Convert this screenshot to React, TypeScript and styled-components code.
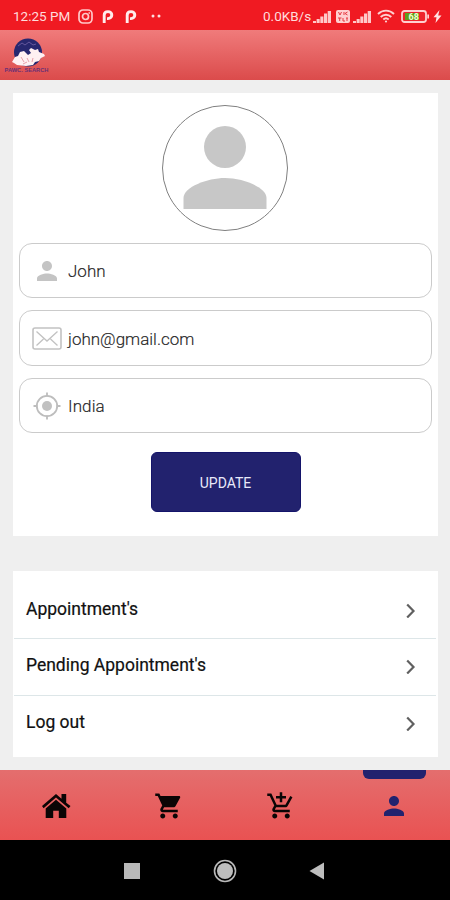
import React from "react";
import styled, { createGlobalStyle } from "styled-components";

const GlobalStyle = createGlobalStyle`
  * { box-sizing: border-box; }
  body { margin: 0; background: #efefef; }
`;

const navy = "#22226e";

const Screen = styled.div`
  width: 450px;
  height: 900px;
  display: flex;
  flex-direction: column;
  background: #efefef;
  font-family: Roboto, "Liberation Sans", sans-serif;
  overflow: hidden;
`;

const StatusBar = styled.div`
  height: 30px;
  flex: none;
  display: flex;
  align-items: center;
  justify-content: space-between;
  padding: 2px 8px 0 13px;
  background: #f01a22;
  color: #ffdcdc;
`;

const StatusGroup = styled.div`
  display: flex;
  align-items: center;
`;

const StatusText = styled.span<{ $width: number }>`
  width: ${(p) => p.$width}px;
  font-size: 13.5px;
  line-height: 16px;
  white-space: nowrap;
`;

const Glyph = styled.svg<{ $left?: number }>`
  display: block;
  flex: none;
  margin-left: ${(p) => p.$left ?? 0}px;
`;

const Header = styled.header`
  height: 50px;
  flex: none;
  padding: 6px 0 0 4px;
  background: linear-gradient(#f07b7b, #db4b4b);
`;

const Content = styled.main`
  height: 690px;
  flex: none;
  padding: 13px 12px 0 13px;
`;

const ProfileCard = styled.section`
  height: 443px;
  padding: 12px 6px 0;
  background: #fff;
  display: flex;
  flex-direction: column;
  align-items: center;
`;

const Avatar = styled.div`
  width: 126px;
  height: 126px;
  flex: none;
  border: 1px solid #808080;
  border-radius: 50%;
  margin: 0 1px 12px 0;
`;

const Field = styled.label<{ $height: number }>`
  width: 413px;
  height: ${(p) => p.$height}px;
  flex: none;
  margin-bottom: 12px;
  padding-left: 11px;
  display: flex;
  align-items: center;
  gap: 5px;
  border: 1px solid #cbcbcb;
  border-radius: 13px;
`;

const FieldIcon = styled.span`
  width: 32px;
  display: flex;
  justify-content: center;
`;

const FieldText = styled.span<{ $spacing: number }>`
  color: #1c1c1c;
  font-size: 17px;
  font-weight: 300;
  line-height: 22px;
  padding-top: 1px;
  letter-spacing: ${(p) => p.$spacing}px;
  -webkit-text-stroke: 0.15px #333;
`;

const UpdateButton = styled.button`
  width: 150px;
  height: 60px;
  flex: none;
  margin: 7px 0 0;
  padding: 1px 0 0;
  border: 1px solid #14146a;
  border-radius: 6px;
  background: ${navy};
  color: #e9e9fa;
  font: 400 14px Roboto, sans-serif;
`;

const MenuCard = styled.nav`
  margin-top: 35px;
  height: 186px;
  padding: 12px 2px 0 1px;
  background: #fff;
`;

const MenuRow = styled.a<{ $last?: boolean }>`
  height: 56.3px;
  padding: 0 18px 4px 12px;
  display: flex;
  align-items: center;
  justify-content: space-between;
  border-bottom: ${(p) => (p.$last ? "none" : "1px solid #dde6e8")};
  color: #111;
  font-size: 17.5px;
  -webkit-text-stroke: 0.2px #111;
`;

const MenuLabel = styled.span`
  padding-top: 1px;
`;

const TabBar = styled.nav`
  height: 70px;
  flex: none;
  display: grid;
  grid-template-columns: repeat(4, 112.5px);
  background: linear-gradient(#e46e6e, #e95252);
`;

const Tab = styled.button<{ $active?: boolean }>`
  position: relative;
  display: flex;
  align-items: center;
  justify-content: center;
  padding: 1px 0 0;
  border: 0;
  background: none;
  color: ${(p) => (p.$active ? navy : "#0b0505")};
`;

const ActiveMark = styled.span`
  position: absolute;
  top: 0;
  left: 25px;
  width: 63px;
  height: 9px;
  border-radius: 0 0 6px 6px;
  background: ${navy};
`;

const SystemBar = styled.footer`
  height: 60px;
  flex: none;
  display: grid;
  grid-template-columns: repeat(3, 93px);
  justify-content: center;
  align-items: center;
  justify-items: center;
  padding-top: 2px;
  background: #000;
`;

const PERSON =
  "M12 12c2.21 0 4-1.79 4-4s-1.79-4-4-4-4 1.79-4 4 1.79 4 4 4zm0 2c-2.67 0-8 1.34-8 4v2h16v-2c0-2.66-5.33-4-8-4z";

const PersonIcon = ({ size, fill = "currentColor" }: { size: number; fill?: string }) => (
  <Glyph width={size} height={size} viewBox="0 0 24 24" fill={fill}>
    <path d={PERSON} />
  </Glyph>
);

const PinterestP = ({ left }: { left: number }) => (
  <Glyph $left={left} width="12" height="13" viewBox="0 0 12 13" fill="none" stroke="#ffecec" strokeWidth="2.900">
    <path d="M2.200 13V5C2.200 2.800 3.800 1.600 6 1.600S9.800 3 9.800 5 8.300 8.600 6 8.600H5" />
  </Glyph>
);

const Signal = ({ left }: { left: number }) => (
  <Glyph $left={left} width="18" height="13" viewBox="0 0 18 13" fill="#ffc9c9">
    <path d="M0 11h3v2H0zM3.600 9h3.100v4H3.600zM7.300 6.500h3.100V13H7.300zM11 3.500h3.100V13H11zM14.700 1h3.300v12h-3.300z" />
  </Glyph>
);

const Logo = () => (
  <Glyph width="46" height="40" viewBox="4 36 46 40">
    <circle cx="28" cy="52.500" r="14" fill="#27276f" />
    <path d="M18 46l4-3 3 2 4-3 4 3 3-1" stroke="#64579c" strokeWidth="1" fill="none" />
    <path
      d="M12 62l3-5 3-1 2-4 4-1 4 4 3-2-2-3 2-2 4 2 3-1 1 3 5 2 1 2-4 2-2 3-4 1-2 3-7 1-9-1-3-2z"
      fill="#fff0f2"
    />
    <path d="M21 57l3 5m3-4l2 4m4-4l-1 4m-9 2l4-2" stroke="#e8a0ab" strokeWidth="1" fill="none" />
    <text
      x="26.500"
      y="71.500"
      textAnchor="middle"
      fontFamily="Liberation Sans"
      fontWeight="700"
      fontSize="5.700"
      fill="#6a3075"
    >
      PAWC. SEARCH
    </text>
  </Glyph>
);

const fields = [
  {
    text: "John",
    height: 55,
    spacing: 0,
    icon: <PersonIcon size={30} fill="#c4c4c4" />,
  },
  {
    text: "john@gmail.com",
    height: 56,
    spacing: 0,
    icon: (
      <Glyph width="30" height="23" viewBox="0 0 30 23" fill="none" stroke="#c2c2c2" strokeWidth="1.6">
        <rect x="1" y="1" width="28" height="21" rx="2" />
        <path d="M4.5 4.5L15 14 25.5 4.5M4.5 18.5l7-6.5M25.5 18.5l-7-6.5" strokeWidth="1.3" />
      </Glyph>
    ),
  },
  {
    text: "India",
    height: 55,
    spacing: 0.1,
    icon: (
      <Glyph width="28" height="28" viewBox="0 0 28 28" fill="none" stroke="#bdbdbd" strokeWidth="1.8">
        <circle cx="14" cy="14" r="10.200" />
        <circle cx="14" cy="14" r="5" fill="#c1c1c1" stroke="none" />
        <path d="M14 .5v4M14 23.500v4M.5 14h4M23.500 14h4" />
      </Glyph>
    ),
  },
];

const menu = ["Appointment's", "Pending Appointment's", "Log out"];

export default function App() {
  return (
    <>
      <GlobalStyle />
      <Screen>
        <StatusBar>
          <StatusGroup>
            <StatusText $width={65}>12:25 PM</StatusText>
            <Glyph width="15" height="15" viewBox="0 0 15 15" fill="none" stroke="#ffc9c9" strokeWidth="1.700">
              <rect x="1" y="1" width="13" height="13" rx="4" />
              <circle cx="7.500" cy="7.500" r="3" />
              <path d="M10.500 4h1.500" />
            </Glyph>
            <PinterestP left={9} />
            <PinterestP left={11} />
            <Glyph $left={14} width="10" height="4" viewBox="0 0 10 4" fill="#ffdede">
              <circle cx="2" cy="2" r="1.500" />
              <circle cx="8" cy="2" r="1.500" />
            </Glyph>
          </StatusGroup>
          <StatusGroup>
            <StatusText $width={49}>0.0KB/s</StatusText>
            <Signal left={1} />
            <Glyph $left={5} width="14" height="13" viewBox="0 0 14 13">
              <rect width="14" height="13" rx="2" fill="#ffd0d0" />
              <path d="M2.500 2l1.500 3 1.500-3M8 2v3M11.500 2L9 3.500 11.500 5M2 8h3.500M3.700 8v3M7 8v3h2M10 8h2M11 8v3" stroke="#e63a42" fill="none" />
            </Glyph>
            <Signal left={3} />
            <Glyph $left={6} width="18" height="14" viewBox="0 0 18 14" fill="none" stroke="#ffd0d0" strokeWidth="1.900">
              <path d="M1 5c4.500-4.500 11.500-4.500 16 0M3.700 8c3-3 7.600-3 10.600 0M6.300 10.500c1.600-1.500 3.800-1.500 5.400 0" />
              <circle cx="9" cy="12.500" r="1.100" fill="#ffd0d0" stroke="none" />
            </Glyph>
            <Glyph $left={6} width="28" height="13" viewBox="0 0 28 13">
              <rect x="1" y="1" width="24" height="11" rx="2.500" fill="#ee242c" stroke="#ffd0d0" strokeWidth="1.800" />
              <rect x="4" y="3" width="14" height="7" fill="#5fa01c" />
              <path d="M26.300 4.500h1.700v4h-1.700z" fill="#ffd0d0" />
              <text x="7.500" y="9.700" fontFamily="Roboto" fontWeight="700" fontSize="9" fill="#f0ffd0">
                68
              </text>
            </Glyph>
            <Glyph $left={4} width="9" height="13" viewBox="0 0 9 13" fill="#ffe2e2">
              <path d="M6.500 0L.500 7.300h3L2.500 13 8.500 5.500h-3.300z" />
            </Glyph>
          </StatusGroup>
        </StatusBar>
        <Header>
          <Logo />
        </Header>
        <Content>
          <ProfileCard>
            <Avatar>
              <Glyph width="124" height="124" viewBox="0 0 124 124" fill="#c7c7c7">
                <circle cx="62" cy="41" r="21" />
                <path d="M20.500 103V92c0-11 24-20 41.500-20s41.500 9 41.500 20v11z" />
              </Glyph>
            </Avatar>
            {fields.map((f) => (
              <Field key={f.text} $height={f.height}>
                <FieldIcon>{f.icon}</FieldIcon>
                <FieldText $spacing={f.spacing}>{f.text}</FieldText>
              </Field>
            ))}
            <UpdateButton>UPDATE</UpdateButton>
          </ProfileCard>
          <MenuCard>
            {menu.map((label, i) => (
              <MenuRow key={label} $last={i === menu.length - 1}>
                <MenuLabel>{label}</MenuLabel>
                <Glyph width="16" height="18" viewBox="0 0 16 18" fill="none" stroke="#606060" strokeWidth="2.200">
                  <path d="M5.200 4.500L11.500 11 5.200 17.500" />
                </Glyph>
              </MenuRow>
            ))}
          </MenuCard>
        </Content>
        <TabBar>
          <Tab>
            <Glyph width="30" height="26" viewBox="0 0 30 26" fill="currentColor">
              <path d="M1 13L15 1l5.500 4.700V1h4.700v8.700L29.500 13l-1.800 2.200L15 4.500 2.600 15.200z" />
              <path d="M4.700 15.500L15 6.700l10.300 8.800V25h-7.500v-7.200h-5.600V25H4.700z" />
            </Glyph>
          </Tab>
          <Tab>
            <Glyph width="30" height="30" viewBox="0 0 24 24" fill="currentColor">
              <path d="M7 18c-1.100 0-1.990.9-1.990 2S5.900 22 7 22s2-.9 2-2-.9-2-2-2zM1 2v2h2l3.600 7.590-1.350 2.450c-.16.280-.25.610-.25.960 0 1.100.9 2 2 2h12v-2H7.420c-.14 0-.25-.11-.25-.25l.03-.12.9-1.630h7.450c.75 0 1.410-.41 1.750-1.030l3.580-6.490c.08-.14.12-.31.12-.48 0-.55-.45-1-1-1H5.210l-.94-2H1zm16 16c-1.100 0-1.990.9-1.990 2s.89 2 1.990 2 2-.9 2-2-.9-2-2-2z" />
            </Glyph>
          </Tab>
          <Tab>
            <Glyph width="30" height="30" viewBox="0 0 24 24" fill="currentColor">
              <path d="M11 9h2V6h3V4h-3V1h-2v3H8v2h3v3zm-4 9c-1.100 0-1.990.9-1.990 2S5.900 22 7 22s2-.9 2-2-.9-2-2-2zm10 0c-1.100 0-1.990.9-1.990 2s.89 2 1.990 2 2-.9 2-2-.9-2-2-2zm-9.830-3.250l.03-.12.9-1.630h7.450c.75 0 1.410-.41 1.750-1.030l3.860-7.010L19.420 4h-.01l-1.100 2-2.760 5H8.530l-.13-.27L6.160 6l-.95-2-.94-2H1v2h2l3.600 7.590-1.350 2.450c-.16.280-.25.610-.25.960 0 1.100.9 2 2 2h12v-2H7.420c-.13 0-.25-.11-.25-.25z" />
            </Glyph>
          </Tab>
          <Tab $active>
            <ActiveMark />
            <PersonIcon size={30} />
          </Tab>
        </TabBar>
        <SystemBar>
          <Glyph width="16" height="16" viewBox="0 0 16 16">
            <rect width="16" height="16" fill="#b9b9b9" />
          </Glyph>
          <Glyph width="24" height="24" viewBox="0 0 24 24">
            <circle cx="12" cy="12" r="10.500" fill="none" stroke="#b9b9b9" strokeWidth="1.600" />
            <circle cx="12" cy="12" r="8" fill="#bdbdbd" />
          </Glyph>
          <Glyph width="18" height="18" viewBox="0 0 18 18">
            <path d="M15 .500v17L.500 9z" fill="#bdbdbd" />
          </Glyph>
        </SystemBar>
      </Screen>
    </>
  );
}
